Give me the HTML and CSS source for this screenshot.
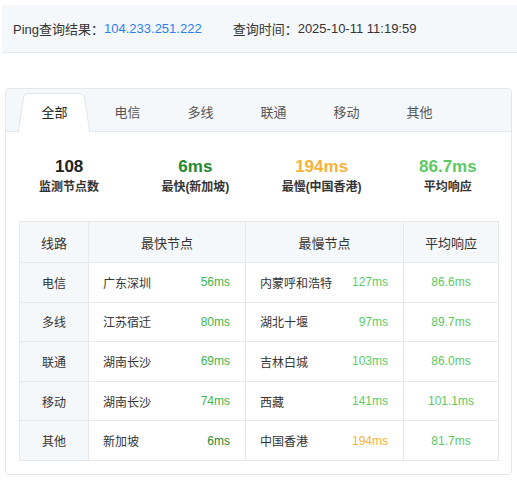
FILE: index.html
```html
<!DOCTYPE html>
<html lang="zh-CN">
<head>
<meta charset="utf-8">
<title>Ping</title>
<link rel="stylesheet" href="styles.css">
</head>
<body>
<div class="topbar">
  <span class="lbl">Ping查询结果：</span><span class="ip">104.233.251.222</span>
  <span class="lbl time">查询时间：</span><span class="val">2025-10-11 11:19:59</span>
</div>

<div class="card">
  <div class="tabs">
    <div class="tab active">
      <svg class="tabshape" viewBox="0 0 72 40" width="72" height="40" preserveAspectRatio="none">
        <path d="M0 40 L5.5 5 Q6.3 0.5 11 0.5 L61 0.5 Q65.7 0.5 66.5 5 L72 40 Z" fill="#fff" stroke="none"/>
        <path d="M0 40 L5.5 5 Q6.3 0.5 11 0.5 L61 0.5 Q65.7 0.5 66.5 5 L72 40" fill="none" stroke="#e3e6e8" stroke-width="1"/>
      </svg>
      <span class="tabtext">全部</span>
    </div>
    <div class="tab"><span class="tabtext">电信</span></div>
    <div class="tab"><span class="tabtext">多线</span></div>
    <div class="tab"><span class="tabtext">联通</span></div>
    <div class="tab"><span class="tabtext">移动</span></div>
    <div class="tab"><span class="tabtext">其他</span></div>
  </div>

  <div class="stats">
    <div class="stat"><div class="num">108</div><div class="slbl">监测节点数</div></div>
    <div class="stat"><div class="num c-dark">6ms</div><div class="slbl">最快(新加坡)</div></div>
    <div class="stat"><div class="num c-orange">194ms</div><div class="slbl">最慢(中国香港)</div></div>
    <div class="stat"><div class="num c-avg">86.7ms</div><div class="slbl">平均响应</div></div>
  </div>

  <table class="tbl">
    <colgroup>
      <col class="w1"><col class="w2"><col class="w3"><col class="w4">
    </colgroup>
    <thead>
      <tr><th>线路</th><th>最快节点</th><th>最慢节点</th><th>平均响应</th></tr>
    </thead>
    <tbody>
      <tr>
        <td class="line">电信</td>
        <td><div class="node"><span>广东深圳</span><span class="c-fast">56ms</span></div></td>
        <td><div class="node"><span>内蒙呼和浩特</span><span class="c-slow">127ms</span></div></td>
        <td class="avg c-avg">86.6ms</td>
      </tr>
      <tr>
        <td class="line">多线</td>
        <td><div class="node"><span>江苏宿迁</span><span class="c-fast">80ms</span></div></td>
        <td><div class="node"><span>湖北十堰</span><span class="c-slow">97ms</span></div></td>
        <td class="avg c-avg">89.7ms</td>
      </tr>
      <tr>
        <td class="line">联通</td>
        <td><div class="node"><span>湖南长沙</span><span class="c-fast">69ms</span></div></td>
        <td><div class="node"><span>吉林白城</span><span class="c-slow">103ms</span></div></td>
        <td class="avg c-avg">86.0ms</td>
      </tr>
      <tr>
        <td class="line">移动</td>
        <td><div class="node"><span>湖南长沙</span><span class="c-fast">74ms</span></div></td>
        <td><div class="node"><span>西藏</span><span class="c-slow">141ms</span></div></td>
        <td class="avg c-avg">101.1ms</td>
      </tr>
      <tr>
        <td class="line">其他</td>
        <td><div class="node"><span>新加坡</span><span class="c-dark">6ms</span></div></td>
        <td><div class="node"><span>中国香港</span><span class="c-orange">194ms</span></div></td>
        <td class="avg c-avg">81.7ms</td>
      </tr>
    </tbody>
  </table>
</div>
</body>
</html>
```

FILE: styles.css
```css
* { box-sizing: border-box; }
html, body {
  margin: 0;
  padding: 0;
  background: #fff;
}
body {
  font-family: "Liberation Sans", "Noto Sans CJK SC", sans-serif;
  color: #333;
  width: 517px;
  overflow: hidden;
}

.topbar {
  margin: 5px 0 0 2px;
  height: 48px;
  background: #f5f8fa;
  border-bottom: 1px solid #e6e8ea;
  display: flex;
  align-items: center;
  padding-left: 11px;
  font-size: 13px;
  color: #333;
}
.topbar .ip { color: #2a7ff0; }
.topbar .time { margin-left: 31px; }

.card {
  margin: 35px 0 0 5px;
  width: 507px;
  border: 1px solid #e4e6e8;
  border-radius: 4px;
  padding-bottom: 13px;
  background: #fff;
}

.tabs {
  height: 43px;
  background: #f5f8fa;
  border-bottom: 1px solid #e6e8ea;
  border-radius: 4px 4px 0 0;
  display: flex;
  align-items: flex-end;
  padding-left: 12px;
}
.tab {
  position: relative;
  width: 73px;
  height: 39px;
  display: flex;
  align-items: center;
  justify-content: center;
  font-size: 13px;
  color: #555;
  margin-bottom: -1px;
  padding-bottom: 3px;
}
.tab.active { color: #222; }
.tabshape {
  position: absolute;
  left: 0;
  top: 0;
  width: 72px;
  height: 40px;
}
.tabtext {
  position: relative;
}

.stats {
  display: grid;
  grid-template-columns: repeat(4, 1fr);
  padding-top: 24px;
  text-align: center;
}
.num {
  font-size: 17px;
  font-weight: 700;
  line-height: 22px;
  color: #222;
}
.slbl {
  font-size: 12px;
  font-weight: 700;
  line-height: 18px;
  color: #333;
}

.c-dark { color: #1f8a2b; }
.c-orange { color: #f6b338; }
.c-avg { color: #5bca64; }
.c-fast { color: #43b54b; }
.c-slow { color: #5ccc66; }

.tbl {
  margin: 25px 0 0 13px;
  width: 479px;
  border-collapse: collapse;
  table-layout: fixed;
  font-size: 12px;
}
.w1 { width: 69px; }
.w2 { width: 157px; }
.w3 { width: 158px; }
.w4 { width: 95px; }
.tbl th, .tbl td {
  border: 1px solid #e6e8ea;
  padding: 0;
}
.tbl th {
  height: 41px;
  background: #f5f8fa;
  font-weight: 400;
  font-size: 13px;
  color: #333;
  text-align: center;
}
.tbl td {
  height: 39.6px;
  color: #333;
}
.tbl td.line {
  background: #f5f8fa;
  text-align: center;
}
.tbl td.avg {
  text-align: center;
  color: #5bca64;
}
.node {
  display: flex;
  justify-content: space-between;
  align-items: center;
  padding: 0 15px 0 14px;
}
```
